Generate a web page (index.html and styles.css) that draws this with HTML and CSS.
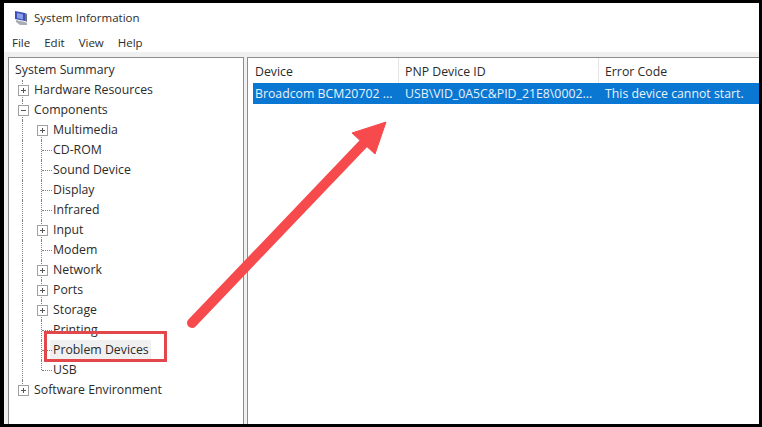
FILE: index.html
```html
<!DOCTYPE html>
<html lang="en">
<head>
<meta charset="utf-8">
<title>System Information</title>
<link rel="stylesheet" href="styles.css">
</head>
<body>
<div class="window">
  <header class="titlebar">
    <svg class="appicon" width="14" height="16" viewBox="0 0 14 16">
      <path d="M1 1 L11 3 L11 11 L1 9 Z" fill="#3b4fb8"/>
      <path d="M3 3 L9 4.2 L9 9.5 L3 8 Z" fill="#8a9ce6"/>
      <path d="M11 3 L13 4 L13 12 L11 11 Z" fill="#6f7380"/>
      <path d="M2 10 L11 12 L13 13 L13 15 L6 15 L2 12 Z" fill="#a9adb5"/>
    </svg>
    <span>System Information</span>
  </header>
  <nav class="menubar">
    <span>File</span><span>Edit</span><span>View</span><span>Help</span>
  </nav>
  <main class="panes">
    <section class="tree">
      <div class="row"><span class="label">System Summary</span></div>
      <div class="row"><span class="cell line plus"></span><span class="label">Hardware Resources</span></div>
      <div class="row"><span class="cell line minus"></span><span class="label">Components</span></div>
      <div class="row"><span class="cell line"></span><span class="cell line first plus"></span><span class="label">Multimedia</span></div>
      <div class="row"><span class="cell line"></span><span class="cell line stub"></span><span class="label">CD-ROM</span></div>
      <div class="row"><span class="cell line"></span><span class="cell line stub"></span><span class="label">Sound Device</span></div>
      <div class="row"><span class="cell line"></span><span class="cell line stub"></span><span class="label">Display</span></div>
      <div class="row"><span class="cell line"></span><span class="cell line stub"></span><span class="label">Infrared</span></div>
      <div class="row"><span class="cell line"></span><span class="cell line plus"></span><span class="label">Input</span></div>
      <div class="row"><span class="cell line"></span><span class="cell line stub"></span><span class="label">Modem</span></div>
      <div class="row"><span class="cell line"></span><span class="cell line plus"></span><span class="label">Network</span></div>
      <div class="row"><span class="cell line"></span><span class="cell line plus"></span><span class="label">Ports</span></div>
      <div class="row"><span class="cell line"></span><span class="cell line plus"></span><span class="label">Storage</span></div>
      <div class="row"><span class="cell line"></span><span class="cell line stub"></span><span class="label">Printing</span></div>
      <div class="row"><span class="cell line"></span><span class="cell line stub"></span><span class="label hover">Problem Devices</span><span class="callout"></span></div>
      <div class="row"><span class="cell line"></span><span class="cell line last stub"></span><span class="label">USB</span></div>
      <div class="row"><span class="cell line last plus"></span><span class="label">Software Environment</span></div>
    </section>
    <section class="list">
      <div class="head">
        <span class="col c1">Device</span>
        <span class="col c2">PNP Device ID</span>
        <span class="col c3">Error Code</span>
      </div>
      <div class="selected">
        <span class="col c1">Broadcom BCM20702 ...</span>
        <span class="col c2">USB\VID_0A5C&amp;PID_21E8\0002...</span>
        <span class="col c3">This device cannot start.</span>
      </div>
    </section>
  </main>
  <svg class="arrow" width="762" height="427" viewBox="0 0 762 427">
    <path d="M192 323 L364 143" stroke="#f64a4c" stroke-width="10" stroke-linecap="round" fill="none"/>
    <path d="M386 122 L352 133 L375 154 Z" fill="#f64a4c" stroke="#f64a4c" stroke-width="1" stroke-linejoin="round"/>
  </svg>
</div>
</body>
</html>
```
FILE: styles.css
```css
* { box-sizing: border-box; }
html, body { margin: 0; padding: 0; }
body { width: 762px; height: 427px; overflow: hidden; background: #000; }
.window {
  position: relative;
  width: 762px;
  height: 427px;
  border: solid #000;
  border-width: 3px 3px 3px 4px;
  background: #fff;
  display: flex;
  flex-direction: column;
  font: 12.3px/20px "Open Sans", "Noto Sans", sans-serif;
  color: #2b2b2b;
}
.titlebar {
  height: 26px;
  display: flex;
  align-items: center;
  gap: 6px;
  padding: 3px 0 0 10px;
  flex: none;
  font-size: 11.5px;
}
.appicon { flex: none; }
.menubar {
  height: 23px;
  display: flex;
  gap: 14px;
  align-items: center;
  padding: 4px 0 0 8px;
  flex: none;
  font-size: 11.5px;
}
.panes {
  flex: 1;
  display: flex;
  gap: 3px;
  background: #f0f0f0;
  padding: 5px 0 0 4px;
  min-height: 0;
}
.tree {
  width: 236px;
  background: #fff;
  border: 1px solid #8c8c8c;
  border-bottom: 0;
  padding: 2px 0 0 6px;
}
.row { height: 20px; display: flex; position: relative; white-space: nowrap; }
.label { line-height: 20px; }
.hover { background: #f0f0f0; padding: 0 2px 0 3px; margin-left: -3px; height: 20px; }
.cell { width: 19px; height: 20px; flex: none; position: relative; }
.line::before {
  content: "";
  position: absolute;
  left: 7px;
  top: 0;
  bottom: 0;
  border-left: 1px dotted #808080;
}
.line.last::before { bottom: 10px; }
.line.first::before { top: 5px; }
.stub::after {
  content: "";
  position: absolute;
  left: 8px;
  top: 10px;
  width: 10px;
  border-top: 1px dotted #808080;
}
.plus::after, .minus::after {
  content: "";
  position: absolute;
  left: 3px;
  top: 5px;
  width: 9px;
  height: 9px;
  border: 1px solid #a0a0a0;
  background: linear-gradient(#555, #555) center / 5px 1px no-repeat, #fff;
}
.plus::after {
  background: linear-gradient(#555, #555) center / 5px 1px no-repeat,
              linear-gradient(#555, #555) center / 1px 5px no-repeat, #fff;
}
.callout {
  position: absolute;
  left: 29px;
  top: -9px;
  width: 123px;
  height: 31px;
  border: 3px solid #e2474b;
}
.list {
  flex: 1;
  background: #fff;
  border: 1px solid #8c8c8c;
  border-width: 1px 0 0 1px;
  padding: 0 0 0 5px;
}
.head { height: 25px; display: flex; align-items: center; }
.head .col { height: 25px; line-height: 28px; border-right: 1px solid #e5e5e5; }
.head .c3 { border-right: 0; }
.selected {
  height: 21px;
  display: flex;
  align-items: center;
  background: #0a78d2;
  color: #e8f2fb;
  white-space: nowrap;
}
.col { flex: none; padding-left: 6px; }
.c1 { width: 146px; padding-left: 2px; }
.c2 { width: 200px; }
.c3 { flex: 1; }
.arrow { position: absolute; left: -4px; top: -3px; pointer-events: none; }
```
